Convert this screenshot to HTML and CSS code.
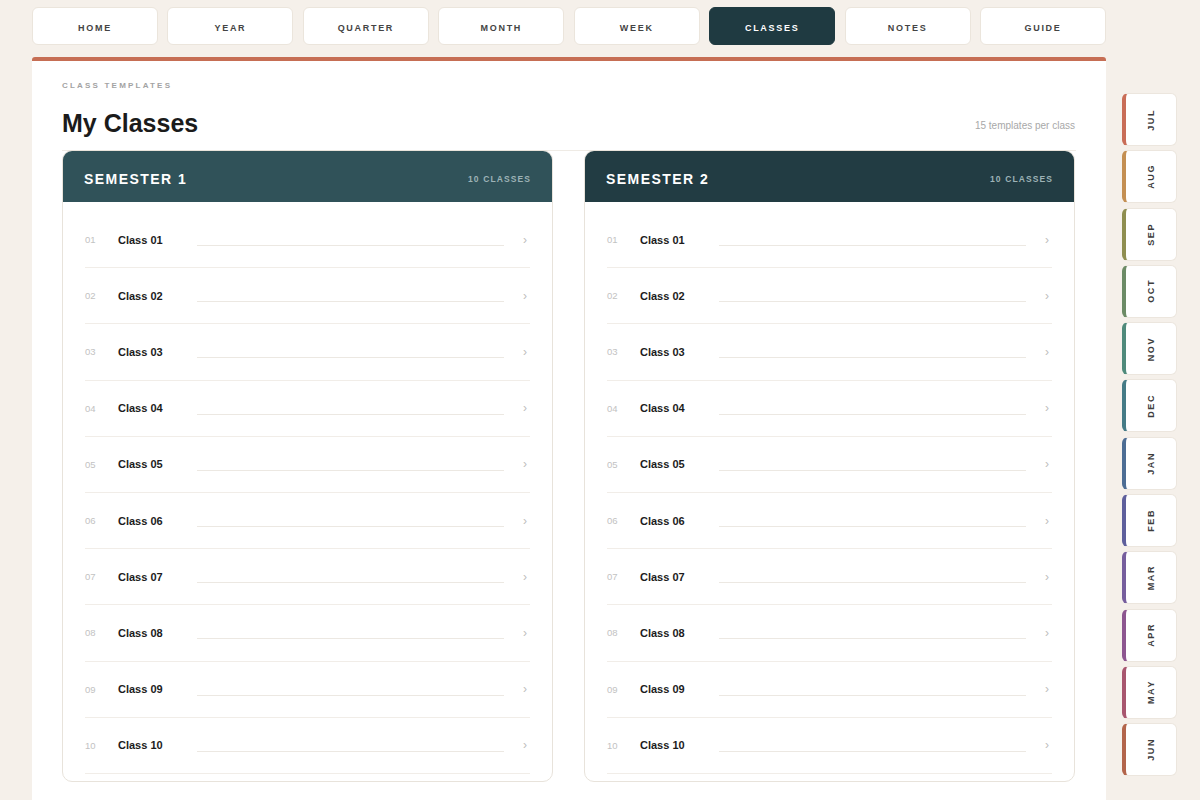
FILE: index.html
```html
<!DOCTYPE html>
<html lang="en">
<head>
<meta charset="utf-8">
<title>My Classes</title>
<link rel="stylesheet" href="styles.css">
</head>
<body>
<div class="page">
  <div class="main">
    <nav class="nav">
      <a class="tab">HOME</a>
      <a class="tab">YEAR</a>
      <a class="tab">QUARTER</a>
      <a class="tab">MONTH</a>
      <a class="tab">WEEK</a>
      <a class="tab active">CLASSES</a>
      <a class="tab">NOTES</a>
      <a class="tab">GUIDE</a>
    </nav>
    <section class="panel">
      <header class="panel-head">
        <div>
          <div class="eyebrow">CLASS TEMPLATES</div>
          <h1 class="title">My Classes</h1>
        </div>
        <div class="meta">15 templates per class</div>
      </header>
      <div class="grid">
        <div class="card">
          <div class="card-head sem1"><span class="sem">SEMESTER 1</span><span class="count">10 CLASSES</span></div>
          <div class="card-body">
            <div class="row"><span class="num">01</span><span class="name">Class 01</span><span class="line"></span><span class="chev">›</span></div>
            <div class="row"><span class="num">02</span><span class="name">Class 02</span><span class="line"></span><span class="chev">›</span></div>
            <div class="row"><span class="num">03</span><span class="name">Class 03</span><span class="line"></span><span class="chev">›</span></div>
            <div class="row"><span class="num">04</span><span class="name">Class 04</span><span class="line"></span><span class="chev">›</span></div>
            <div class="row"><span class="num">05</span><span class="name">Class 05</span><span class="line"></span><span class="chev">›</span></div>
            <div class="row"><span class="num">06</span><span class="name">Class 06</span><span class="line"></span><span class="chev">›</span></div>
            <div class="row"><span class="num">07</span><span class="name">Class 07</span><span class="line"></span><span class="chev">›</span></div>
            <div class="row"><span class="num">08</span><span class="name">Class 08</span><span class="line"></span><span class="chev">›</span></div>
            <div class="row"><span class="num">09</span><span class="name">Class 09</span><span class="line"></span><span class="chev">›</span></div>
            <div class="row"><span class="num">10</span><span class="name">Class 10</span><span class="line"></span><span class="chev">›</span></div>
          </div>
        </div>
        <div class="card">
          <div class="card-head sem2"><span class="sem">SEMESTER 2</span><span class="count">10 CLASSES</span></div>
          <div class="card-body">
            <div class="row"><span class="num">01</span><span class="name">Class 01</span><span class="line"></span><span class="chev">›</span></div>
            <div class="row"><span class="num">02</span><span class="name">Class 02</span><span class="line"></span><span class="chev">›</span></div>
            <div class="row"><span class="num">03</span><span class="name">Class 03</span><span class="line"></span><span class="chev">›</span></div>
            <div class="row"><span class="num">04</span><span class="name">Class 04</span><span class="line"></span><span class="chev">›</span></div>
            <div class="row"><span class="num">05</span><span class="name">Class 05</span><span class="line"></span><span class="chev">›</span></div>
            <div class="row"><span class="num">06</span><span class="name">Class 06</span><span class="line"></span><span class="chev">›</span></div>
            <div class="row"><span class="num">07</span><span class="name">Class 07</span><span class="line"></span><span class="chev">›</span></div>
            <div class="row"><span class="num">08</span><span class="name">Class 08</span><span class="line"></span><span class="chev">›</span></div>
            <div class="row"><span class="num">09</span><span class="name">Class 09</span><span class="line"></span><span class="chev">›</span></div>
            <div class="row"><span class="num">10</span><span class="name">Class 10</span><span class="line"></span><span class="chev">›</span></div>
          </div>
        </div>
      </div>
    </section>
  </div>
  <aside class="months">
    <a class="month m-jul"><span>JUL</span></a>
    <a class="month m-aug"><span>AUG</span></a>
    <a class="month m-sep"><span>SEP</span></a>
    <a class="month m-oct"><span>OCT</span></a>
    <a class="month m-nov"><span>NOV</span></a>
    <a class="month m-dec"><span>DEC</span></a>
    <a class="month m-jan"><span>JAN</span></a>
    <a class="month m-feb"><span>FEB</span></a>
    <a class="month m-mar"><span>MAR</span></a>
    <a class="month m-apr"><span>APR</span></a>
    <a class="month m-may"><span>MAY</span></a>
    <a class="month m-jun"><span>JUN</span></a>
  </aside>
</div>
</body>
</html>
```
FILE: styles.css
```css
* { box-sizing: border-box; }
html, body { margin: 0; padding: 0; }
body {
  background: #f5f0ea;
  font-family: "Liberation Sans", Arial, sans-serif;
  color: #1c1c1c;
  overflow: hidden;
}
.page {
  display: flex;
  padding-left: 32px;
  gap: 16px;
  height: 800px;
}
.main {
  width: 1074px;
  display: flex;
  flex-direction: column;
}
.nav {
  display: flex;
  gap: 9.5px;
  padding-top: 7px;
  margin-bottom: 12px;
}
.tab {
  flex: 1;
  height: 38px;
  display: flex;
  align-items: center;
  justify-content: center;
  padding-top: 3px;
  background: #fff;
  border: 1px solid #ebe5dc;
  border-radius: 6px;
  font-size: 9px;
  font-weight: 700;
  letter-spacing: 1.7px;
  color: #444;
}
.tab.active {
  background: #1f3a41;
  border-color: #1f3a41;
  color: #fff;
}
.panel {
  flex: 1;
  background: #fff;
  border-top: 4px solid #c66e54;
  border-radius: 3px 3px 0 0;
  padding: 0 30px;
}
.panel-head {
  display: flex;
  justify-content: space-between;
  align-items: flex-end;
  border-bottom: 1px solid #efebe5;
  padding-bottom: 11px;
}
.eyebrow {
  margin-top: 19px;
  font-size: 8px;
  line-height: 12px;
  font-weight: 700;
  letter-spacing: 2.2px;
  color: #a3a3a3;
}
.title {
  margin: 15px 0 0;
  font-size: 25px;
  line-height: 32px;
  font-weight: 700;
  color: #1b1b1b;
}
.meta {
  font-size: 10px;
  color: #a8a8a8;
  line-height: 14px;
  padding-bottom: 6px;
  padding-right: 1px;
}
.grid {
  display: grid;
  grid-template-columns: 491px 491px;
  gap: 31px;
  margin-top: -1px;
}
.card {
  border: 1px solid #e8e3db;
  border-radius: 10px;
  overflow: hidden;
}
.card-head {
  height: 52px;
  margin: -1px -1px 0;
  border-radius: 10px 10px 0 0;
  display: flex;
  align-items: center;
  justify-content: space-between;
  padding: 5px 22px 0;
}
.sem1 { background: #305259; }
.sem2 { background: #223c43; }
.sem {
  font-size: 14px;
  font-weight: 700;
  letter-spacing: 1.45px;
  color: #fff;
}
.count {
  font-size: 8.5px;
  font-weight: 700;
  letter-spacing: 1.1px;
  color: #9db3b6;
}
.card-body {
  padding: 10px 22px 7px;
}
.row {
  height: 56.2px;
  display: flex;
  align-items: center;
  border-bottom: 1px solid #f1ede8;
}
.num {
  width: 33px;
  font-size: 9.5px;
  color: #c2c2c2;
}
.name {
  width: 79px;
  font-size: 11px;
  font-weight: 700;
  color: #1c1c1c;
}
.line {
  flex: 1;
  height: 1px;
  background: #ece8e2;
  margin-top: 12px;
}
.chev {
  width: 26px;
  text-align: right;
  font-size: 12px;
  color: #bdbdbd;
  padding-right: 3px;
}
.months {
  display: flex;
  flex-direction: column;
  gap: 4.3px;
  padding-top: 93px;
  width: 55px;
}
.month {
  height: 53px;
  background: #fff;
  border: 1px solid #ece6de;
  border-left: 4px solid #c96d57;
  border-radius: 6px;
  display: flex;
  align-items: center;
  justify-content: center;
}
.month span {
  writing-mode: vertical-rl;
  transform: rotate(180deg);
  font-size: 9px;
  font-weight: 700;
  letter-spacing: 1.6px;
  color: #3d3d3d;
}
.m-jul { border-left-color: #c96d57; }
.m-aug { border-left-color: #c48f52; }
.m-sep { border-left-color: #8f8e50; }
.m-oct { border-left-color: #6c8b66; }
.m-nov { border-left-color: #4f8a7b; }
.m-dec { border-left-color: #457b86; }
.m-jan { border-left-color: #4d6d94; }
.m-feb { border-left-color: #5e5f9c; }
.m-mar { border-left-color: #765e9d; }
.m-apr { border-left-color: #8d5690; }
.m-may { border-left-color: #a8566f; }
.m-jun { border-left-color: #b3654b; }
```
